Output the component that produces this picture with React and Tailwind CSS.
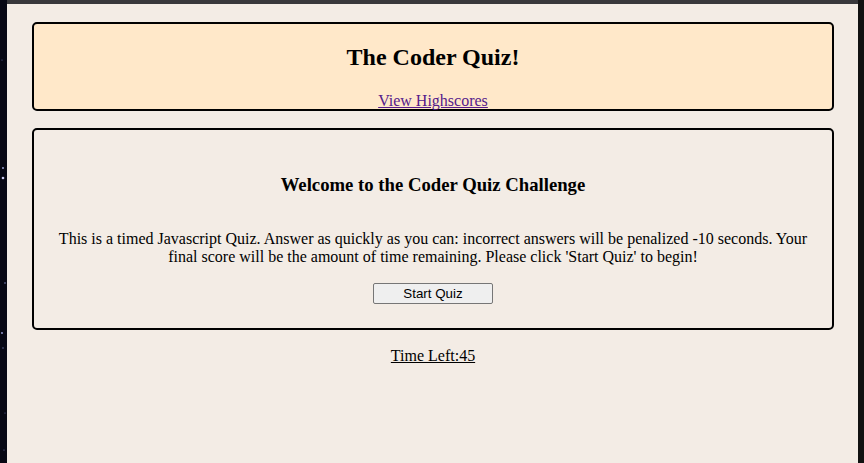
export default function App() {
  const serif = { fontFamily: '"Liberation Serif", "Times New Roman", serif' };
  return (
    <div className="flex h-[463px] w-[864px] overflow-hidden bg-[#f3ece5]" style={serif}>
      <div className="w-[7px] h-full bg-[#070814]">
        <svg width="7" height="463" viewBox="0 0 7 463">
          <circle cx="3" cy="168" r="1" fill="#9aa0d0" />
          <circle cx="3" cy="178" r="1.3" fill="#c8c8f0" />
          <circle cx="5" cy="283" r="0.8" fill="#8088c0" />
          <circle cx="2" cy="333" r="0.9" fill="#a0a8e0" />
          <circle cx="3" cy="348" r="0.7" fill="#7078b0" />
          <circle cx="5" cy="413" r="0.6" fill="#6068a0" />
          <circle cx="4" cy="450" r="0.6" fill="#7078b0" />
          <circle cx="2" cy="60" r="0.6" fill="#6068a0" />
        </svg>
      </div>
      <div className="flex flex-1 flex-col">
        <div className="h-[4px] bg-[#38383b]" />
        <div className="flex flex-col pl-[25px] pr-[24px] pt-[18px]">
          <div className="h-[89px] rounded-[5px] border-2 border-black bg-[#ffe8c9] flex flex-col items-center">
            <h1 className="mt-[20px] text-[24px] font-bold leading-[27px] text-black">The Coder Quiz!</h1>
            <a href="#" className="mt-[21px] text-[16px] leading-[18px] text-[#551a8b] underline">View Highscores</a>
          </div>
          <div className="mt-[17px] h-[202px] rounded-[5px] border-2 border-black flex flex-col items-center px-[20px]">
            <h3 className="mt-[44px] text-[18.72px] font-bold leading-[21px] text-black">Welcome to the Coder Quiz Challenge</h3>
            <p className="mt-[35px] text-center text-[16px] leading-[18px] text-black">
              This is a timed Javascript Quiz. Answer as quickly as you can: incorrect answers will be penalized -10 seconds. Your final score will be the amount of time remaining. Please click 'Start Quiz' to begin!
            </p>
            <button
              className="mt-[17px] h-[21px] w-[120px] rounded-[2px] border border-[#767676] bg-[#efefef] text-[13.33px] leading-[15px] text-black"
              style={{ fontFamily: '"Liberation Sans", Arial, sans-serif' }}
            >
              Start Quiz
            </button>
          </div>
          <div className="mt-[17px] flex justify-center">
            <span className="text-[16px] leading-[18px] text-black underline">Time Left:45</span>
          </div>
        </div>
      </div>
      <div className="w-[6px] h-full bg-[#111111]" />
    </div>
  );
}
